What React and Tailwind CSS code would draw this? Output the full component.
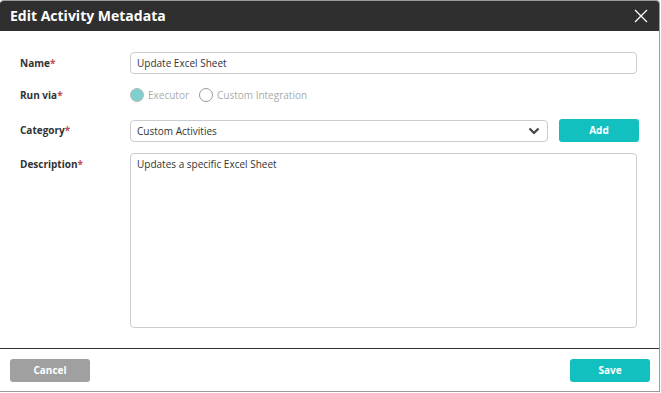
import React, { useState } from 'react';

const Label = ({ children }) => (
  <div className="w-[110px] shrink-0 text-[10px] font-bold text-[#333]">
    {children}
    <span className="text-[#c0504d]">*</span>
  </div>
);

const App = () => {
  const [name, setName] = useState('Update Excel Sheet');
  const [desc, setDesc] = useState('Updates a specific Excel Sheet');

  return (
    <div className="w-[661px] h-[393px] bg-white" style={{ fontFamily: '"Open Sans", sans-serif' }}>
      <div className="w-[660px] h-[392px] flex flex-col border-t border-r border-b border-[#9a9a9a] rounded-tl-[4px] rounded-tr-[4px] overflow-hidden">
        {/* Header */}
        <div className="h-[30px] shrink-0 bg-[#2f2f2f] flex items-center justify-between pl-[10px] pr-[11px]">
          <h1 className="text-[14px] font-bold text-white leading-none">Edit Activity Metadata</h1>
          <button className="text-white">
            <svg width="14" height="14" viewBox="0 0 14 14" fill="none" stroke="currentColor" strokeWidth="1.3">
              <path d="M1 1 L13 13 M13 1 L1 13" />
            </svg>
          </button>
        </div>

        {/* Body */}
        <div className="flex-1 flex flex-col pt-[21px] pl-[20px] pr-[22px]">
          <div className="flex items-start h-[22px]">
            <div className="shrink-0 pt-[4px]"><Label>Name</Label></div>
            <input
              value={name}
              onChange={e => setName(e.target.value)}
              className="flex-1 h-[22px] border border-[#cccccc] rounded-[4px] px-[6px] text-[10px] text-[#333] outline-none"
            />
          </div>

          <div className="flex items-center mt-[13px] h-[16px]">
            <Label>Run via</Label>
            <div className="flex items-center gap-[4px] text-[10px] text-[#aaaaaa]">
              <span className="w-[14px] h-[14px] rounded-full bg-[#7fcfcf] border border-[#b8b8b8]" />
              <span>Executor</span>
              <span className="ml-[6px] w-[14px] h-[14px] rounded-full bg-white border border-[#9a9a9a]" />
              <span>Custom Integration</span>
            </div>
          </div>

          <div className="flex items-start mt-[17px] h-[23px]">
            <div className="shrink-0 pt-[3px]"><Label>Category</Label></div>
            <div className="shrink-0 w-[418px] h-[22px] border border-[#cccccc] rounded-[4px] px-[6px] flex items-center justify-between text-[10px] text-[#333]">
              <span>Custom Activities</span>
              <svg width="12" height="8" viewBox="0 0 12 8" className="mr-[1px]">
                <path d="M1.5 1.5 L6 6 L10.5 1.5" fill="none" stroke="#444" strokeWidth="2.2" />
              </svg>
            </div>
            <button className="shrink-0 ml-[11px] -mt-[1px] w-[80px] h-[23px] rounded-[3px] bg-[#13c0c0] text-white text-[10px] font-bold">
              Add
            </button>
          </div>

          <div className="flex items-start mt-[10px]">
            <div className="shrink-0 pt-[4px]"><Label>Description</Label></div>
            <textarea
              value={desc}
              onChange={e => setDesc(e.target.value)}
              className="flex-1 h-[175px] border border-[#cccccc] rounded-[4px] px-[6px] py-[3px] text-[10px] text-[#333] outline-none resize-none"
            />
          </div>
        </div>

        {/* Footer */}
        <div className="h-[43px] shrink-0 border-t border-[#333] flex items-center justify-between pl-[10px] pr-[9px]">
          <button className="w-[80px] h-[23px] rounded-[3px] bg-[#a0a0a0] text-white text-[10px] font-bold">Cancel</button>
          <button className="w-[80px] h-[23px] rounded-[3px] bg-[#13c0c0] text-white text-[10px] font-bold">Save</button>
        </div>
      </div>
    </div>
  );
};

export default App;
